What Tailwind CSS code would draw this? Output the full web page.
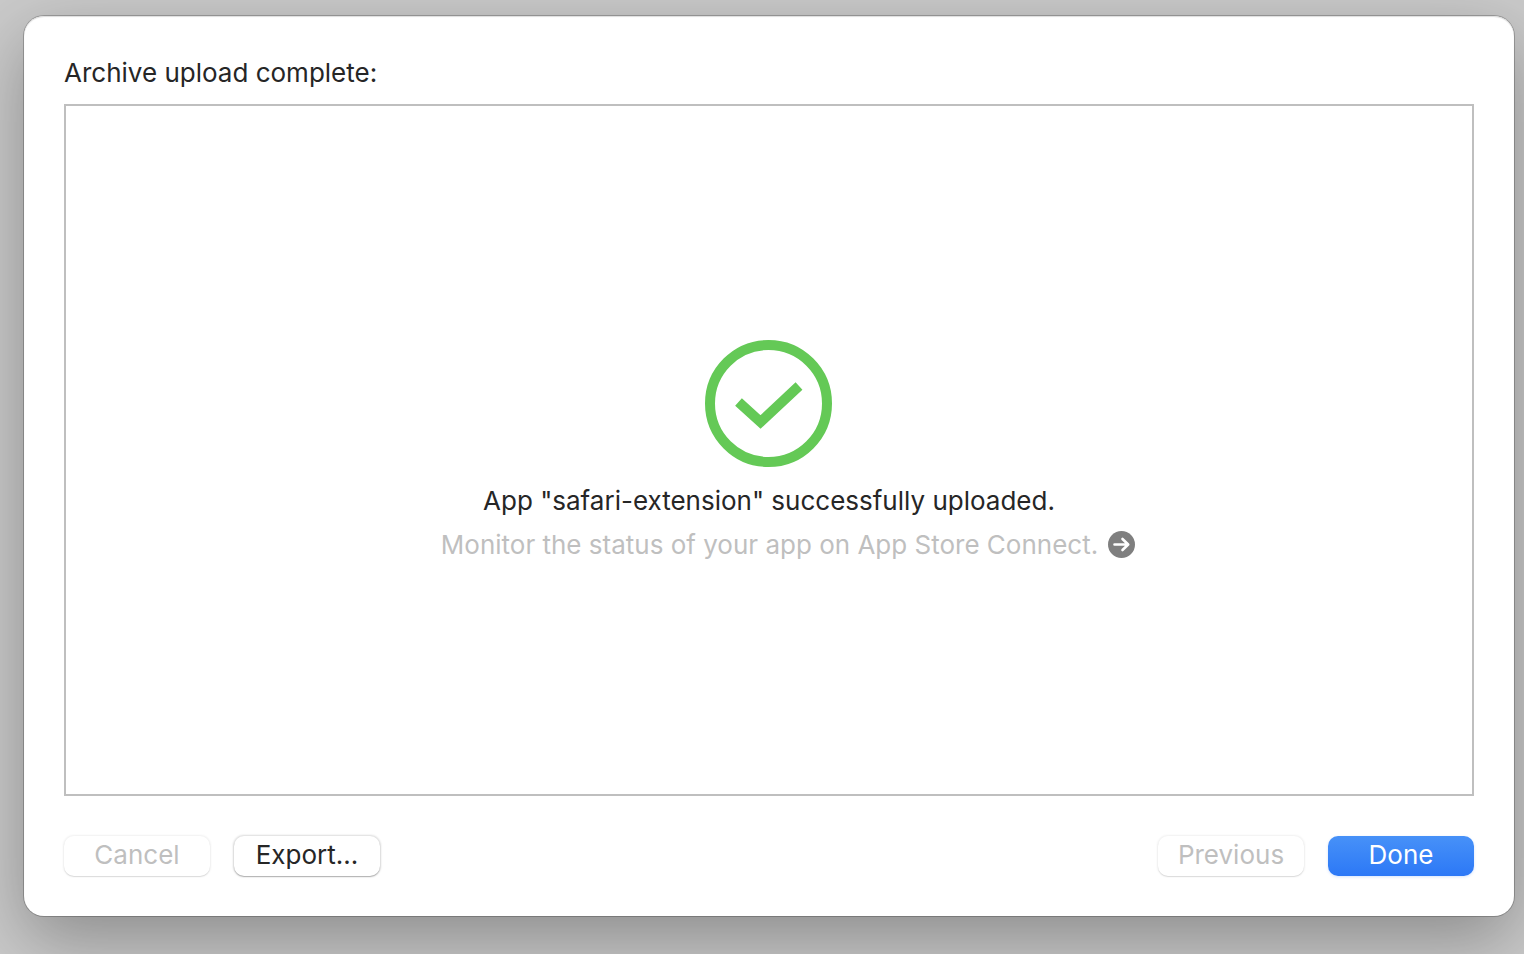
<!DOCTYPE html>
<html lang="en">
<head>
<meta charset="utf-8">
<title>Archive upload</title>
<script src="https://cdn.jsdelivr.net/npm/@tailwindcss/browser@4"></script>
</head>
<body class="min-h-screen flex bg-[#cacaca] pt-4 pr-[10px] pb-[38px] pl-6 overflow-hidden font-[Inter,sans-serif] text-[26px] leading-8 text-[#262626]">
<main class="flex-1 flex flex-col rounded-[20px] bg-white px-10 pt-[41px] pb-10 shadow-[inset_0_1px_1px_#ddd,0_0_0_1px_rgba(0,0,0,0.22),0_24px_70px_rgba(0,0,0,0.31)]">
  <h1>Archive upload complete:</h1>
  <section class="mt-[15px] flex-1 flex flex-col items-center justify-center border-2 border-[#bfbfbf]">
    <svg class="w-32 h-[127px]" viewBox="0 0 127 127" preserveAspectRatio="xMinYMid" fill="none" stroke="#64c956" stroke-width="10" aria-hidden="true"><circle cx="63.5" cy="63.5" r="58.5"/><path d="M33.5 62 55.5 82 94 46"/></svg>
    <p class="mt-[18px]">App "safari-extension" successfully uploaded.</p>
    <p class="mt-3 pl-[38px] flex items-center gap-[10px] text-[#bfbfbf]">Monitor the status of your app on App Store Connect.
      <a href="#" aria-label="Open App Store Connect"><svg class="size-[27px]" viewBox="0 0 27 27" fill="none"><circle cx="13.5" cy="13.5" r="13.5" fill="#7f7f7f"/><path d="M6.5 13.5H20M14.5 8l5.7 5.5-5.7 5.5" stroke="#fff" stroke-width="2.6" stroke-linecap="round" stroke-linejoin="round"/></svg></a></p>
  </section>
  <footer class="mt-10 flex justify-between">
    <div class="flex gap-6">
      <button class="h-10 w-[146px] rounded-[10px] pb-[2px] text-[#bfbfbf] shadow-[0_0_2px_1px_rgba(0,0,0,0.06),0_1px_1px_rgba(0,0,0,0.1)]" disabled>Cancel</button>
      <button class="h-10 w-[146px] rounded-[10px] pb-[2px] shadow-[0_0_2px_1px_rgba(0,0,0,0.14),0_1px_1px_rgba(0,0,0,0.22)]">Export...</button>
    </div>
    <div class="flex gap-6">
      <button class="h-10 w-[146px] rounded-[10px] pb-[2px] text-[#bfbfbf] shadow-[0_0_2px_1px_rgba(0,0,0,0.06),0_1px_1px_rgba(0,0,0,0.1)]" disabled>Previous</button>
      <button class="h-10 w-[146px] rounded-[10px] pb-[2px] text-white bg-linear-to-b from-[#4791f8] to-[#2c78f6] shadow-[0_1px_3px_rgba(44,120,246,0.2)]">Done</button>
    </div>
  </footer>
</main>
</body>
</html>
